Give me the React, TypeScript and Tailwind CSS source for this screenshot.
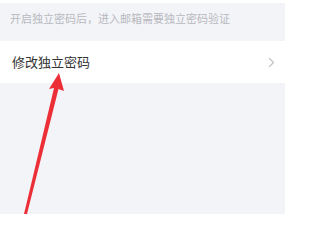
export default function App() {
  return (
    <div className="relative w-[285px] h-[214px] overflow-hidden bg-[#f3f4f8] font-['Noto_Sans_CJK_SC',sans-serif]">
      <div className="h-[3px] bg-white" />

      {/* Hint */}
      <div className="h-[38px] px-[10px] pt-[7px]">
        <p className="text-[11px] leading-[16px] text-[#b8b9be]">开启独立密码后，进入邮箱需要独立密码验证</p>
      </div>

      {/* Row */}
      <div className="h-[42px] bg-white flex items-center justify-between pl-[12px] pr-[10px]">
        <span className="text-[13px] text-[#333333]">修改独立密码</span>
        <svg width="7" height="11" viewBox="0 0 7 11" fill="none">
          <path d="M1.5 1.5l4 4-4 4" stroke="#c4c5c9" strokeWidth="1.3" strokeLinecap="round" strokeLinejoin="round" />
        </svg>
      </div>

      {/* Annotation arrow */}
      <svg className="absolute inset-0 pointer-events-none" width="285" height="214" viewBox="0 0 285 214">
        <polygon
          points="59,73 49,89 54,88 24,214 27,214 58.5,89 64,91"
          fill="#ec2f36"
        />
      </svg>
    </div>
  )
}
